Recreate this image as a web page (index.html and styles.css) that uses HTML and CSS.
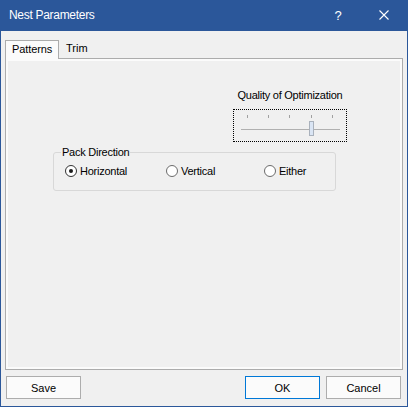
FILE: index.html
```html
<!DOCTYPE html>
<html>
<head>
<meta charset="utf-8">
<link rel="stylesheet" href="styles.css">
</head>
<body>
<div class="window">
  <header class="titlebar">
    <span class="title">Nest Parameters</span>
    <span class="cap help">?</span>
    <span class="cap close"><svg width="10" height="10" viewBox="0 0 10 10"><path d="M0.5 0.5 L9.5 9.5 M9.5 0.5 L0.5 9.5" stroke="#fff" stroke-width="1.1" fill="none"/></svg></span>
  </header>
  <div class="client">
    <div class="tabs">
      <div class="tab active">Patterns</div>
      <div class="tab">Trim</div>
    </div>
    <div class="panel">
      <div class="quality">
        <div class="q-label">Quality of Optimization</div>
        <div class="trackbar">
          <svg width="112" height="31" viewBox="0 0 112 31">
            <g stroke="#a0a0a0" stroke-width="1">
              <line x1="13.5" y1="5" x2="13.5" y2="8"/>
              <line x1="34.5" y1="5" x2="34.5" y2="8"/>
              <line x1="55.5" y1="5" x2="55.5" y2="8"/>
              <line x1="77.5" y1="5" x2="77.5" y2="8"/>
              <line x1="98.5" y1="5" x2="98.5" y2="8"/>
            </g>
            <line x1="7" y1="19.5" x2="106" y2="19.5" stroke="#b0b0b0" stroke-width="1.2"/>
            <rect x="75.5" y="11.5" width="4" height="14" fill="#dae5f4" stroke="#a9b1bc" stroke-width="1"/>
          </svg>
        </div>
      </div>
      <fieldset class="group">
        <legend>Pack Direction</legend>
        <div class="radios">
          <label class="radio w1"><span class="circle checked"></span>Horizontal</label>
          <label class="radio w2"><span class="circle"></span>Vertical</label>
          <label class="radio"><span class="circle"></span>Either</label>
        </div>
      </fieldset>
    </div>
    <div class="actions">
      <button class="btn">Save</button>
      <span class="spacer"></span>
      <button class="btn primary">OK</button>
      <button class="btn">Cancel</button>
    </div>
  </div>
</div>
</body>
</html>
```
FILE: styles.css
```css
* { box-sizing: border-box; }
html, body { margin: 0; padding: 0; background: #f0f0f0; }
body { font-family: "Liberation Sans", Arial, sans-serif; color: #000; }

.window { width: 408px; height: 407px; display: flex; flex-direction: column; background: #f0f0f0; }

.titlebar {
  height: 31px; flex: none; background: #2b579a; color: #fff;
  display: flex; align-items: center; font-size: 12px;
}
.title { padding-left: 9px; flex: 1; letter-spacing: -0.3px; line-height: 31px; }
.cap { width: 46px; height: 31px; display: flex; align-items: center; justify-content: center; }
.help { font-size: 13px; padding-bottom: 1px; }
.close { width: 47px; padding-right: 1px; }
.close svg { display: block; margin-top: -1px; }

.client {
  flex: 1; border: 1px solid #2b579a; border-top: 0;
  padding: 9px 4px 0 4px; display: flex; flex-direction: column;
}

.tabs { display: flex; height: 18px; align-items: flex-start; font-size: 11px; }
.tab { line-height: 17px; padding: 0 7px; }
.tab.active {
  position: relative; z-index: 1; width: 54px; height: 19px; margin-bottom: -1px;
  padding: 0 0 0 6px; border: 1px solid #acacac; border-bottom: 0;
  background: #fbfbfb; letter-spacing: -0.1px;
}

.panel {
  height: 312px; flex: none; border: 1px solid #acacac;
  box-shadow: inset 0 0 0 2px #fbfbfb; background: #f0f0f0;
  display: flex; flex-direction: column; align-items: flex-start;
  font-size: 11px; letter-spacing: -0.25px;
}

.quality { margin: 30px 0 0 227px; width: 114px; display: flex; flex-direction: column; align-items: center; }
.q-label { line-height: 13px; white-space: nowrap; }
.trackbar { margin-top: 7px; width: 114px; height: 33px; border: 1px dotted #000; }
.trackbar svg { display: block; }

.group {
  margin: 4px 0 0 47px; width: 283px; padding: 5px 0 12px 0;
  border: 1px solid #d8d8d8; border-radius: 3px; min-inline-size: 0;
}
.group legend { margin-left: 7px; padding: 0 1px; line-height: 13px; }
.radios { display: flex; height: 14px; align-items: center; padding-left: 11px; }
.radio { display: flex; align-items: center; line-height: 13px; white-space: nowrap; }
.w1 { width: 101px; }
.w2 { width: 98px; }
.circle {
  width: 12px; height: 12px; border-radius: 50%; border: 1px solid #6b6b6b;
  background: #fff; margin-right: 3px; display: flex; align-items: center; justify-content: center; flex: none;
}
.circle.checked { border-color: #333; }
.circle.checked::after { content: ""; width: 4px; height: 4px; border-radius: 50%; background: #1a1a1a; }

.actions { display: flex; margin: 6px 2px 0 1px; }
.spacer { flex: 1; }
.btn {
  width: 75px; height: 23px; border: 1px solid #adadad; background: #fbfbfb;
  font-family: "Liberation Sans", Arial, sans-serif; font-size: 11px; color: #000;
  padding: 0; margin: 0;
}
.btn.primary { border-color: #0078d7; margin-right: 6px; }
```
